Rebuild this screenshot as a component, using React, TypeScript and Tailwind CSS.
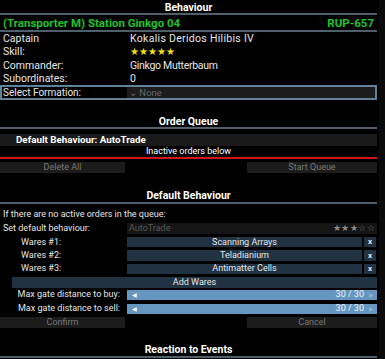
import React from 'react';

const line = 'h-[2px] bg-[#4f5f6c]';

const SectionTitle: React.FC<{ title: string; className?: string }> = ({ title, className }) => (
  <div className={className}>
    <div className="h-[13px] flex items-end justify-center font-bold text-[10.5px] text-white">{title}</div>
    <div className={line} />
  </div>
);

const InfoRow: React.FC<{ label: string; children: React.ReactNode }> = ({ label, children }) => (
  <div className="h-[13.6px] flex items-center">
    <div className="w-[130px] pl-[3px]">{label}</div>
    <div className="flex-1">{children}</div>
  </div>
);

const WareRow: React.FC<{ label: string; ware: string }> = ({ label, ware }) => (
  <div className="h-[13.4px] flex items-center">
    <div className="w-[127px] pl-[21px]">{label}</div>
    <div className="w-[235px] h-[10.5px] bg-[#213343] flex items-center justify-center">{ware}</div>
    <div className="ml-[2px] w-[12px] h-[10.5px] bg-[#213343] flex items-center justify-center text-[8px] font-bold">x</div>
  </div>
);

const SliderRow: React.FC<{ label: string }> = ({ label }) => (
  <div className="h-[13.6px] flex items-center">
    <div className="w-[127px] pr-[7px] text-right">{label}</div>
    <div className="flex-1 h-[10px] bg-[#6596bf] flex items-center justify-between pl-[5px] pr-[3px]">
      <span className="text-[6px] text-white">◀</span>
      <span className="flex items-center gap-[5px] text-[#eef3f8]">
        30 / 30 <span className="text-[6px] text-[#8fb2cf]">▶</span>
      </span>
    </div>
  </div>
);

const GreyButton: React.FC<{ label: string; width: string }> = ({ label, width }) => (
  <div className={`${width} h-[11px] bg-[#1c1c1c] flex items-center justify-center text-[#787878]`}>{label}</div>
);

export default function App() {
  return (
    <div
      className="w-[385px] h-[359px] overflow-hidden bg-black flex text-[#e6e6e6] text-[9px] leading-none"
      style={{ fontFamily: 'Roboto, "Noto Sans", sans-serif' }}
    >
      <div className="w-[377px] flex flex-col">
        <SectionTitle title="Behaviour" />
        <div className="h-[15px] pt-[2px] flex items-center justify-between px-[3px] text-[#1fc22a] font-bold text-[11.5px]">
          <span>(Transporter M) Station Ginkgo 04</span>
          <span>RUP-657</span>
        </div>
        <div className={line} />
        <div className="text-[10.5px]">
          <InfoRow label="Captain">
            <span className="tracking-[0.3px]">Kokalis Deridos Hilibis IV</span>
          </InfoRow>
          <InfoRow label="Skill:">
            <span className="text-[#f5e11a] text-[9.5px]">★★★★★</span>
          </InfoRow>
          <InfoRow label="Commander:">
            <span className="tracking-[-0.3px]">Ginkgo Mutterbaum</span>
          </InfoRow>
          <InfoRow label="Subordinates:">0</InfoRow>
        </div>
        <div className="-mt-[1px] h-[15px] border-2 border-[#5f8299] flex items-center text-[10px]">
          <div className="w-[125px] pl-[1px]">Select Formation:</div>
          <div className="flex-1 h-full bg-[#1c1c1c] flex items-center pl-[2px] text-[#666] text-[9.5px]">⌄ None</div>
        </div>

        <SectionTitle title="Order Queue" className="mt-[14px]" />
        <div className="mt-[5px] h-[12px] bg-[#1a1a1a] flex items-center pl-[16px] font-bold text-white text-[9.8px]">
          Default Behaviour: AutoTrade
        </div>
        <div className="h-[11px] flex items-center justify-center text-white">Inactive orders below</div>
        <div className="h-[2px] bg-[#d0141c]" />
        <div className="mt-[3px] flex justify-between">
          <GreyButton label="Delete All" width="w-[125px]" />
          <GreyButton label="Start Queue" width="w-[130px]" />
        </div>

        <SectionTitle title="Default Behaviour" className="mt-[15.3px]" />
        <div className="h-[13px] mt-[4px] flex items-center pl-[3px]">If there are no active orders in the queue:</div>
        <div className="h-[14.8px] flex items-center">
          <div className="w-[127px] pl-[3px]">Set default behaviour:</div>
          <div className="flex-1 h-[11px] bg-[#151515] flex items-center justify-between pl-[2px] pr-[2px] text-[#585858]">
            <span>AutoTrade</span>
            <span className="text-[8.5px] text-[#8a8a8a] tracking-[0.5px]">★★★<span className="text-[#6a6a6a]">☆☆</span></span>
          </div>
        </div>
        <WareRow label="Wares #1:" ware="Scanning Arrays" />
        <WareRow label="Wares #2:" ware="Teladianium" />
        <WareRow label="Wares #3:" ware="Antimatter Cells" />
        <div className="ml-[12px] h-[11px] mt-[1.5px] bg-[#213343] flex items-center justify-center">Add Wares</div>
        <div>
          <SliderRow label="Max gate distance to buy:" />
          <SliderRow label="Max gate distance to sell:" />
        </div>
        <div className="mt-[1.5px] flex justify-between">
          <GreyButton label="Confirm" width="w-[125px]" />
          <GreyButton label="Cancel" width="w-[130px]" />
        </div>

        <SectionTitle title="Reaction to Events" className="mt-[15px]" />
      </div>
      <div className="w-[2px]" />
      <div className="flex-1 bg-[#0b0b0b]" />
    </div>
  );
}
